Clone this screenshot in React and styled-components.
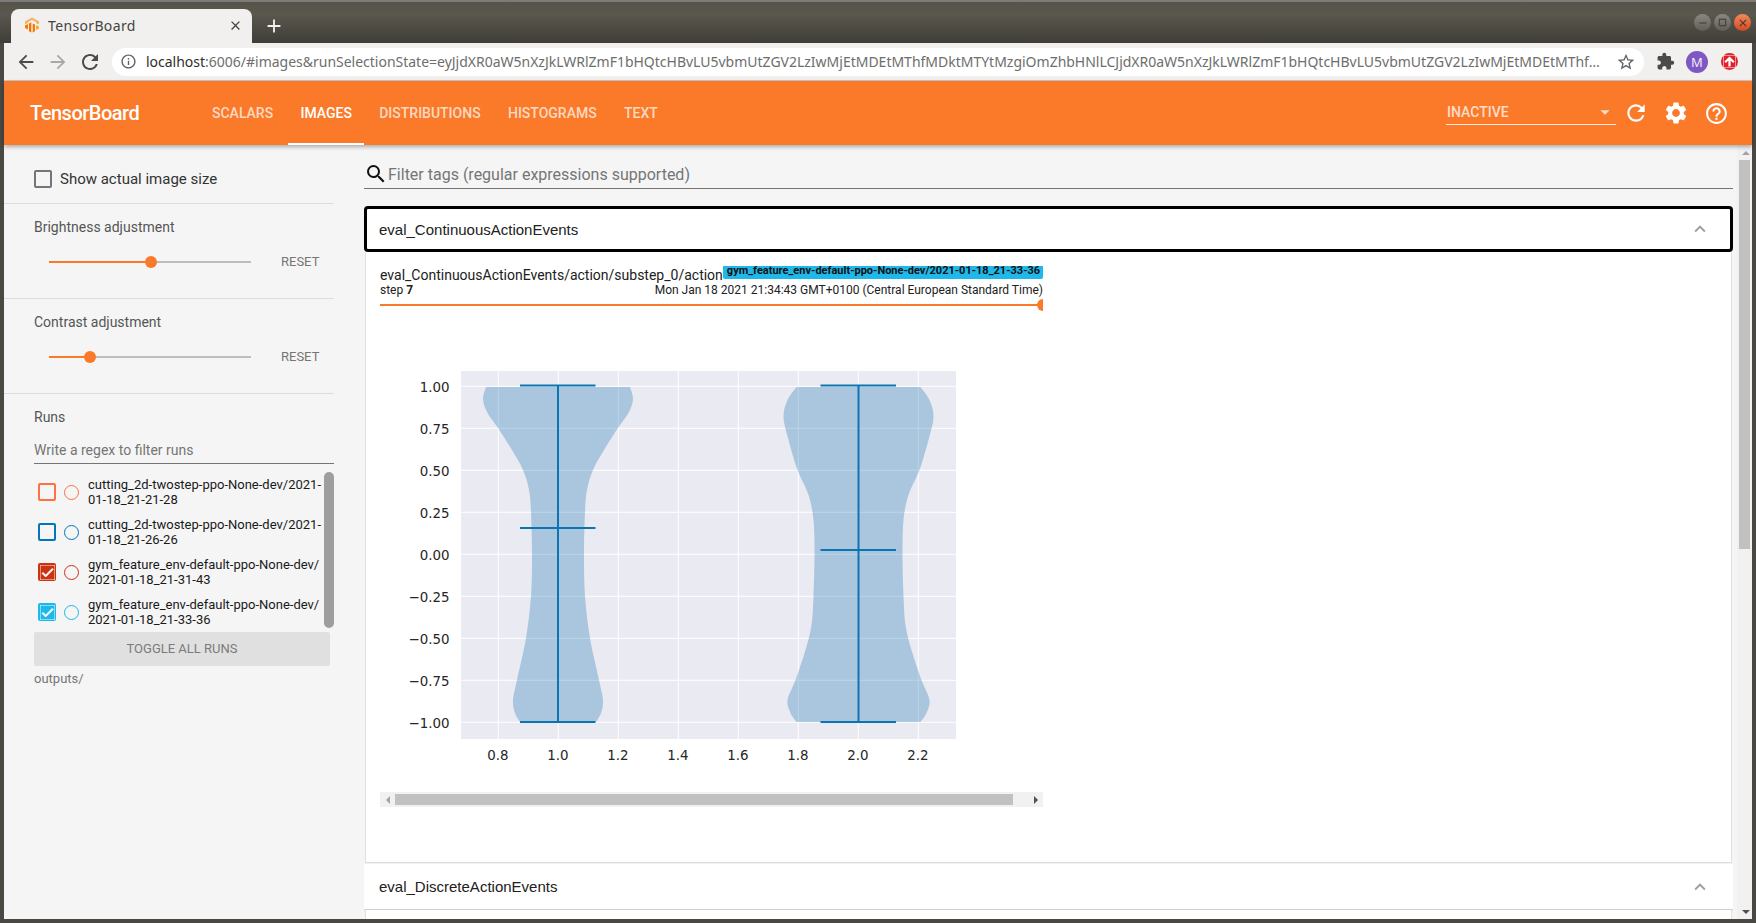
import React from "react";
import styled, { createGlobalStyle } from "styled-components";
import {
  MdAdd,
  MdArrowBack,
  MdArrowDropDown,
  MdArrowForward,
  MdArrowUpward,
  MdCheck,
  MdClose,
  MdCropSquare,
  MdExpandLess,
  MdExtension,
  MdHelpOutline,
  MdInfoOutline,
  MdRefresh,
  MdRemove,
  MdSearch,
  MdSettings,
  MdStarBorder,
} from "react-icons/md";

const ORANGE = "#fb7a29";

const GlobalStyle = createGlobalStyle`
  html, body {
    margin: 0;
    height: 100%;
    overflow: hidden;
  }
  body {
    font-family: Roboto, "Liberation Sans", sans-serif;
    font-size: 14px;
    color: #212121;
  }
  * {
    box-sizing: border-box;
  }
`;

const Window = styled.div`
  width: 1756px;
  height: 923px;
  display: flex;
  flex-direction: column;
  background: #4a4842;
  padding: 0 4px 4px 4px;
  overflow: hidden;
`;

/* browser chrome */
const TitleBar = styled.div`
  height: 43px;
  margin: 0 -4px;
  flex: none;
  display: flex;
  align-items: flex-end;
  padding-left: 11px;
  border-top: 2px solid #7c7b77;
  background: linear-gradient(#56534b, #5a574e 30%, #3f3d37);
`;

const Tab = styled.div`
  width: 241px;
  height: 34px;
  display: flex;
  align-items: center;
  padding: 0 9px 2px 13px;
  background: #f1f0ee;
  border-radius: 8px 8px 0 0;
  font-family: "Noto Sans", sans-serif;
  font-size: 14px;
  letter-spacing: 0.35px;
  color: #45433f;
`;

const TabTitle = styled.span`
  flex: 1;
  margin-left: 8px;
`;

const NewTab = styled.div`
  margin: 0 0 5px 11px;
  color: #f1f0ee;
  display: flex;
  height: 24px;
  align-items: center;
`;

const TitleSpacer = styled.div`
  flex: 1;
`;

const WindowButtons = styled.div`
  display: flex;
  gap: 3px;
  padding-right: 5px;
  align-self: flex-start;
  margin-top: 12px;
`;

const WindowButton = styled.div`
  width: 17px;
  height: 17px;
  border-radius: 50%;
  display: flex;
  align-items: center;
  justify-content: center;
  background: ${({ $close }) =>
    $close
      ? "linear-gradient(#f08a5c, #d5481f)"
      : "linear-gradient(#8a8881, #5f5d56)"};
  color: #3a3833;
`;

const Toolbar = styled.div`
  height: 38px;
  flex: none;
  display: flex;
  align-items: center;
  padding-left: 6px;
  background: #f1f0ee;
  border-bottom: 1px solid #c9c8c4;
`;

const NavButton = styled.div`
  width: 32px;
  height: 32px;
  flex: none;
  display: flex;
  align-items: center;
  justify-content: center;
  color: ${({ $dim }) => ($dim ? "#a9a8a5" : "#4b4b49")};
`;

const Omnibox = styled.div`
  width: 1532px;
  height: 28px;
  margin: 0 5px 0 6px;
  flex: none;
  display: flex;
  align-items: center;
  padding: 0 8px 0 8px;
  border-radius: 14px;
  background: #fff;
  color: #5f6368;
`;

const UrlText = styled.div`
  flex: 1;
  margin-left: 9px;
  font-family: "Noto Sans", sans-serif;
  font-size: 14px;
  letter-spacing: -0.01px;
  white-space: nowrap;
  overflow: hidden;
  color: #6e6e6c;

  b {
    font-weight: 400;
    color: #2e2e2c;
  }
`;

const Avatar = styled.div`
  width: 22px;
  height: 22px;
  border-radius: 50%;
  background: #7e57c2;
  color: #efeaf7;
  font-family: "Noto Sans", sans-serif;
  font-size: 13px;
  display: flex;
  align-items: center;
  justify-content: center;
`;

const UpdateDot = styled.div`
  width: 17px;
  height: 17px;
  border-radius: 50%;
  background: #e0202a;
  color: #fff;
  display: flex;
  align-items: center;
  justify-content: center;

  svg {
    stroke: #fff;
    stroke-width: 2;
  }
`;

/* tensorboard header */
const Header = styled.header`
  height: 64px;
  flex: none;
  display: flex;
  align-items: stretch;
  padding: 0 16px 0 26px;
  background: ${ORANGE};
  color: #fff;
  position: relative;
  z-index: 2;
  box-shadow: 0 2px 4px rgba(0, 0, 0, 0.3);
`;

const Logo = styled.div`
  width: 170px;
  font-size: 20px;
  font-weight: 500;
  letter-spacing: -0.5px;
  line-height: 64px;
`;

const NavTabs = styled.nav`
  display: flex;
  flex: 1;
`;

const NavTab = styled.div`
  padding: 0 12px;
  margin-right: 3.3px;
  font-size: 14px;
  font-weight: 500;
  line-height: 64px;
  text-transform: uppercase;
  color: ${({ $active }) => ($active ? "#fff" : "rgba(255, 255, 255, 0.72)")};
  border-bottom: 2px solid ${({ $active }) => ($active ? "#fff" : "transparent")};
`;

const RunsSelect = styled.div`
  width: 170px;
  height: 27px;
  align-self: flex-start;
  margin-top: 17px;
  padding: 2px 0 0 1px;
  display: flex;
  align-items: center;
  justify-content: space-between;
  font-size: 14px;
  font-weight: 500;
  color: rgba(255, 255, 255, 0.75);
  border-bottom: 1px solid rgba(255, 255, 255, 0.85);
`;

const HeaderIcon = styled.div`
  width: 40px;
  display: flex;
  align-items: center;
  justify-content: center;
`;

/* page */
const Body = styled.div`
  flex: 1;
  min-height: 0;
  display: flex;
  background: #f5f5f5;
`;

const Sidebar = styled.aside`
  width: 360px;
  flex: none;
`;

const Section = styled.div`
  width: 330px;
  padding: 15px 0 24px 30px;
  border-bottom: 1px solid #dcdcdc;
`;

const ActualSizeSection = styled(Section)`
  padding: 25px 0 15px 30px;
  display: flex;
  align-items: center;
  gap: 8px;
  font-size: 15px;
  color: #333;
`;

const PlainBox = styled.div`
  width: 18px;
  height: 18px;
  border: 2px solid #757575;
  border-radius: 2px;
`;

const SectionLabel = styled.div`
  line-height: 16px;
  color: #555;
`;

const SliderRow = styled.div`
  height: 24px;
  margin-top: 15px;
  display: flex;
  align-items: center;
`;

const SliderTrack = styled.div`
  width: 202px;
  height: 2px;
  margin-left: 15px;
  background: #bdbdbd;
  position: relative;
`;

const SliderFill = styled.div`
  height: 100%;
  width: ${({ $at }) => $at}px;
  background: ${ORANGE};
`;

const SliderThumb = styled.div`
  position: absolute;
  left: ${({ $at }) => $at - 6}px;
  top: -5px;
  width: 12px;
  height: 12px;
  border-radius: 50%;
  background: ${ORANGE};
`;

const ResetLabel = styled.div`
  margin: 0 0 2px 30px;
  font-size: 13px;
  color: #757575;
`;

const RunsPanel = styled.div`
  width: 330px;
  padding: 15px 0 0 30px;
`;

const RunFilter = styled.div`
  height: 27px;
  margin-top: 12px;
  padding-top: 5px;
  line-height: 16px;
  color: #757575;
  border-bottom: 1px solid #757575;
`;

const RunsScroller = styled.div`
  height: 156px;
  margin-top: 8px;
  display: flex;
  justify-content: space-between;
  overflow: hidden;
`;

const RunRows = styled.div`
  width: 290px;
`;

const RunRow = styled.div`
  height: 40px;
  display: flex;
  align-items: center;
  padding-left: 4px;
`;

const RunBox = styled.div`
  width: 18px;
  height: 18px;
  flex: none;
  border-radius: 2px;
  border: 2px solid ${({ $color }) => $color};
  background: ${({ $checked, $color }) => ($checked ? $color : "transparent")};
  color: #fff;
  display: flex;
  align-items: center;
  justify-content: center;

  svg {
    stroke: #fff;
    stroke-width: 1.5;
    flex: none;
  }
`;

const RunDot = styled.div`
  width: 15px;
  height: 15px;
  flex: none;
  margin: 0 9px 0 8px;
  border-radius: 50%;
  border: 1.75px solid ${({ $color }) => $color};
`;

const RunName = styled.div`
  font-size: 13px;
  line-height: 15px;
  color: #1a1a1a;
  white-space: pre;
`;

const RunsThumb = styled.div`
  width: 10px;
  border-radius: 5px;
  background: #9e9e9e;
`;

const ToggleButton = styled.div`
  width: 296px;
  height: 34px;
  margin-top: 4px;
  padding-bottom: 2px;
  border-radius: 2px;
  background: #e0e0e0;
  color: #7b7b7b;
  font-size: 13px;
  display: flex;
  align-items: center;
  justify-content: center;
`;

const OutputsLabel = styled.div`
  margin-top: 5px;
  font-size: 13px;
  line-height: 16px;
  color: #757575;
`;

const Main = styled.main`
  width: 1369px;
  flex: none;
  overflow: hidden;
`;

const TagFilter = styled.div`
  height: 44px;
  padding-top: 15px;
  display: flex;
  align-items: center;
  font-size: 16px;
  color: #757575;
  border-bottom: 1px solid #757575;

  svg {
    color: #111;
    flex: none;
  }
`;

const CategoryHeader = styled.div`
  height: ${({ $focused }) => ($focused ? "46px" : "45px")};
  margin-top: ${({ $focused }) => ($focused ? "17px" : "1px")};
  display: flex;
  align-items: center;
  justify-content: space-between;
  padding: 0 ${({ $focused }) => ($focused ? "19px" : "22px")} 0
    ${({ $focused }) => ($focused ? "12px" : "15px")};
  background: #fff;
  font-family: "Liberation Sans", sans-serif;
  font-size: 15px;
  color: #212121;
  border: ${({ $focused }) => ($focused ? "3px solid #000" : "none")};
  border-radius: ${({ $focused }) => ($focused ? "4px" : "0")};
  box-shadow: ${({ $focused }) =>
    $focused ? "none" : "0 1px 2px rgba(0, 0, 0, 0.22)"};

  svg {
    color: #9e9e9e;
  }
`;

const CategoryBody = styled.div`
  height: ${({ $open }) => ($open ? "611px" : "60px")};
  margin: ${({ $open }) => ($open ? "0" : "1px")} 1px 0 1px;
  padding: 14px 0 0 14px;
  background: #fff;
  border: 1px solid #e0e0e0;
  border-top: none;
  border-bottom: ${({ $open }) => ($open ? "1px solid #dcdcdc" : "none")};
`;

const ImageCard = styled.div`
  width: 663px;
`;

const CardTitleRow = styled.div`
  display: flex;
  height: 16px;
`;

const CardTitle = styled.div`
  font-size: 14px;
  line-height: 18px;
  white-space: nowrap;
  color: #212121;
`;

const RunChip = styled.div`
  flex: 1;
  height: 13px;
  padding: 0 3px 0 4px;
  border-radius: 0 0 2px 2px;
  background: #1fb8ea;
  font-size: 11px;
  font-weight: 700;
  line-height: 9px;
  white-space: nowrap;
  overflow: hidden;
  color: #111;
`;

const StepRow = styled.div`
  height: 14px;
  margin-top: 1px;
  display: flex;
  justify-content: space-between;
  font-size: 12px;
  line-height: 14px;
  color: #212121;

  b {
    font-weight: 700;
  }
`;

const StepSlider = styled.div`
  height: 2px;
  margin-top: 7px;
  background: ${ORANGE};
  position: relative;
  overflow: visible;
`;

const StepEnd = styled.div`
  position: absolute;
  right: 0;
  top: -5px;
  width: 6px;
  height: 12px;
  border-radius: 6px 0 0 6px;
  background: ${ORANGE};
`;

const PlotFrame = styled.svg`
  display: block;
  margin-top: 14px;
`;

const TickText = styled.text`
  font-family: "DejaVu Sans", sans-serif;
  font-size: 13.4px;
  fill: #262626;
`;

const HScroll = styled.div`
  height: 15px;
  display: flex;
  align-items: center;
  background: #f1f1f1;
`;

const HThumb = styled.div`
  width: 618px;
  height: 11px;
  margin: 0 15px;
  background: #c1c1c1;
`;

const ArrowGlyph = styled.div`
  width: 0;
  height: 0;
  flex: none;
  border-top: 4px solid transparent;
  border-bottom: 4px solid transparent;
  border-left: ${({ $right }) => ($right ? "4px solid #505050" : "none")};
  border-right: ${({ $right }) => ($right ? "none" : "4px solid #a3a3a3")};
  margin-left: 6px;
  margin-right: ${({ $right }) => ($right ? "0" : "-10px")};
`;

const VScroll = styled.div`
  width: 15px;
  margin-left: 4px;
  flex: none;
  display: flex;
  flex-direction: column;
  align-items: flex-end;
  background: #f1f1f1;
`;

const VArrow = styled.div`
  width: 13px;
  height: 15px;
  flex: none;
  display: flex;
  align-items: center;
  justify-content: center;

  &::after {
    content: "";
    border-left: 4px solid transparent;
    border-right: 4px solid transparent;
    border-${({ $down }) => ($down ? "top" : "bottom")}: 4px solid
      ${({ $down }) => ($down ? "#505050" : "#a3a3a3")};
  }
`;

const VThumb = styled.div`
  width: 11px;
  height: 389px;
  margin-right: 2px;
  background: #c1c1c1;
`;

const VSpacer = styled.div`
  flex: 1;
`;

const RUNS = [
  { name: "cutting_2d-twostep-ppo-None-dev/2021-\n01-18_21-21-28", color: "#ff7043" },
  { name: "cutting_2d-twostep-ppo-None-dev/2021-\n01-18_21-26-26", color: "#0077bb" },
  { name: "gym_feature_env-default-ppo-None-dev/\n2021-01-18_21-31-43", color: "#cc3311", checked: true },
  { name: "gym_feature_env-default-ppo-None-dev/\n2021-01-18_21-33-36", color: "#1fb8ea", checked: true },
];

const URL_REST =
  ":6006/#images&runSelectionState=eyJjdXR0aW5nXzJkLWRlZmF1bHQtcHBvLU5vbmUtZGV2LzIwMjEtMDEtMThfMDktMTYtMzgiOmZhbHNlLCJjdXR0aW5nXzJkLWRlZmF1bHQtcHBvLU5vbmUtZGV2LzIwMjEtMDEtMThf…";

const Y_TICKS = ["1.00", "0.75", "0.50", "0.25", "0.00", "−0.25", "−0.50", "−0.75", "−1.00"];
const X_TICKS = ["0.8", "1.0", "1.2", "1.4", "1.6", "1.8", "2.0", "2.2"];
const tickY = (i) => 386.3 + i * 42;
const tickX = (i) => 498.3 + i * 60;

// half widths of the violins, [y, half width]
const VIOLIN_A = [
  [387, 72], [399, 75], [412, 71], [428, 60], [450, 46], [470, 35], [490, 29], [512, 27],
  [554, 26], [596, 27], [638, 32], [680, 41], [700, 45], [713, 43], [722, 38],
];
const VIOLIN_B = [
  [387, 62], [400, 71], [417, 75], [440, 70], [470, 61], [495, 50], [520, 45], [554, 44],
  [596, 45], [625, 47], [650, 53], [680, 63], [700, 71], [713, 68], [722, 62],
];

// smooth outline through the points, down the right side and back up the left
const violinPath = (cx, pts) => {
  const right = pts.map(([y, w]) => [cx + w, y]);
  const left = pts.map(([y, w]) => [cx - w, y]).reverse();
  const side = (p) => {
    let d = "";
    for (let i = 0; i < p.length - 1; i++) {
      const a = p[i - 1] || p[i];
      const b = p[i];
      const c = p[i + 1];
      const e = p[i + 2] || c;
      d += ` C${b[0] + (c[0] - a[0]) / 6} ${b[1] + (c[1] - a[1]) / 6} ${c[0] - (e[0] - b[0]) / 6} ${
        c[1] - (e[1] - b[1]) / 6
      } ${c[0]} ${c[1]}`;
    }
    return d;
  };
  return `M${right[0][0]} ${right[0][1]}${side(right)} L${left[0][0]} ${left[0][1]}${side(left)} Z`;
};

const TensorBoardMark = () => (
  <svg width="16" height="16" viewBox="0 0 16 16">
    <path d="M8 0.5 15 4.3 15 7.5 12 6 12 5 8 3 4 5 4 6 1 7.5 1 4.3Z" fill="#f6b26b" />
    <path d="M1 8.5 4 7 4 12.5 1 11Z" fill="#f57c00" />
    <path d="M5 6.5 7.3 5.3 7.3 15.5 5 14.3Z" fill="#ff6f00" />
    <path d="M8.7 6.5 11 7.6 11 14.3 8.7 15.5Z" fill="#f57c00" />
    <path d="M12 8.2 15 9.5 15 11.4 12 13Z" fill="#ffa726" />
  </svg>
);

const Violin = ({ cx, mean, pts }) => (
  <g>
    <path d={violinPath(cx, pts)} fill="#1875af" fillOpacity="0.3" />
    <g stroke="#0b75b3" strokeWidth="2" fill="none">
      <path d={`M${cx} 385.6V722.4`} />
      <path d={`M${cx - 38} 385.6H${cx + 37.5}`} />
      <path d={`M${cx - 38} ${mean}H${cx + 37.5}`} />
      <path d={`M${cx - 38} 722H${cx + 37.5}`} />
    </g>
  </g>
);

const ViolinPlot = () => (
  <PlotFrame width="663" height="472" viewBox="380 320 663 472">
    <rect x="461" y="371" width="495" height="368" fill="#eaeaf2" />
    <g stroke="#fff" strokeWidth="1">
      {Y_TICKS.map((t, i) => (
        <line key={t} x1="461" x2="956" y1={tickY(i)} y2={tickY(i)} />
      ))}
      {X_TICKS.map((t, i) => (
        <line key={t} x1={tickX(i)} x2={tickX(i)} y1="371" y2="739" />
      ))}
    </g>
    <Violin cx={558} mean={528} pts={VIOLIN_A} />
    <Violin cx={858.5} mean={550} pts={VIOLIN_B} />
    {Y_TICKS.map((t, i) => (
      <TickText key={t} x="449.5" y={tickY(i) + 6} textAnchor="end">
        {t}
      </TickText>
    ))}
    {X_TICKS.map((t, i) => (
      <TickText key={t} x={tickX(i) - 0.5} y="760" textAnchor="middle">
        {t}
      </TickText>
    ))}
  </PlotFrame>
);

const Adjustment = ({ label, at }) => (
  <Section>
    <SectionLabel>{label}</SectionLabel>
    <SliderRow>
      <SliderTrack>
        <SliderFill $at={at} />
        <SliderThumb $at={at} />
      </SliderTrack>
      <ResetLabel>RESET</ResetLabel>
    </SliderRow>
  </Section>
);

export default function App() {
  return (
    <Window>
      <GlobalStyle />
      <TitleBar>
        <Tab>
          <TensorBoardMark />
          <TabTitle>TensorBoard</TabTitle>
          <MdClose size={15} />
        </Tab>
        <NewTab>
          <MdAdd size={22} />
        </NewTab>
        <TitleSpacer />
        <WindowButtons>
          <WindowButton>
            <MdRemove size={12} />
          </WindowButton>
          <WindowButton>
            <MdCropSquare size={11} />
          </WindowButton>
          <WindowButton $close>
            <MdClose size={12} />
          </WindowButton>
        </WindowButtons>
      </TitleBar>

      <Toolbar>
        <NavButton>
          <MdArrowBack size={22} />
        </NavButton>
        <NavButton $dim>
          <MdArrowForward size={22} />
        </NavButton>
        <NavButton>
          <MdRefresh size={24} />
        </NavButton>
        <Omnibox>
          <MdInfoOutline size={17} />
          <UrlText>
            <b>localhost</b>
            {URL_REST}
          </UrlText>
          <MdStarBorder size={20} />
        </Omnibox>
        <NavButton>
          <MdExtension size={19} />
        </NavButton>
        <NavButton>
          <Avatar>M</Avatar>
        </NavButton>
        <NavButton>
          <UpdateDot>
            <MdArrowUpward size={13} />
          </UpdateDot>
        </NavButton>
      </Toolbar>

      <Header>
        <Logo>TensorBoard</Logo>
        <NavTabs>
          <NavTab>Scalars</NavTab>
          <NavTab $active>Images</NavTab>
          <NavTab>Distributions</NavTab>
          <NavTab>Histograms</NavTab>
          <NavTab>Text</NavTab>
        </NavTabs>
        <RunsSelect>
          INACTIVE
          <MdArrowDropDown size={22} />
        </RunsSelect>
        <HeaderIcon>
          <MdRefresh size={26} />
        </HeaderIcon>
        <HeaderIcon>
          <MdSettings size={26} />
        </HeaderIcon>
        <HeaderIcon>
          <MdHelpOutline size={25} />
        </HeaderIcon>
      </Header>

      <Body>
        <Sidebar>
          <ActualSizeSection>
            <PlainBox />
            Show actual image size
          </ActualSizeSection>
          <Adjustment label="Brightness adjustment" at={102} />
          <Adjustment label="Contrast adjustment" at={41} />
          <RunsPanel>
            <SectionLabel>Runs</SectionLabel>
            <RunFilter>Write a regex to filter runs</RunFilter>
            <RunsScroller>
              <RunRows>
                {RUNS.map((run) => (
                  <RunRow key={run.name}>
                    <RunBox $color={run.color} $checked={run.checked}>
                      {run.checked && <MdCheck size={15} />}
                    </RunBox>
                    <RunDot $color={run.color} />
                    <RunName>{run.name}</RunName>
                  </RunRow>
                ))}
              </RunRows>
              <RunsThumb />
            </RunsScroller>
            <ToggleButton>TOGGLE ALL RUNS</ToggleButton>
            <OutputsLabel>outputs/</OutputsLabel>
          </RunsPanel>
        </Sidebar>

        <Main>
          <TagFilter>
            <MdSearch size={24} />
            Filter tags (regular expressions supported)
          </TagFilter>
          <CategoryHeader $focused>
            eval_ContinuousActionEvents
            <MdExpandLess size={22} />
          </CategoryHeader>
          <CategoryBody $open>
            <ImageCard>
              <CardTitleRow>
                <CardTitle>eval_ContinuousActionEvents/action/substep_0/action</CardTitle>
                <RunChip>gym_feature_env-default-ppo-None-dev/2021-01-18_21-33-36</RunChip>
              </CardTitleRow>
              <StepRow>
                <span>
                  step <b>7</b>
                </span>
                <span>Mon Jan 18 2021 21:34:43 GMT+0100 (Central European Standard Time)</span>
              </StepRow>
              <StepSlider>
                <StepEnd />
              </StepSlider>
              <ViolinPlot />
              <HScroll>
                <ArrowGlyph />
                <HThumb />
                <ArrowGlyph $right />
              </HScroll>
            </ImageCard>
          </CategoryBody>
          <CategoryHeader>
            eval_DiscreteActionEvents
            <MdExpandLess size={22} />
          </CategoryHeader>
          <CategoryBody />
        </Main>

        <VScroll>
          <VArrow />
          <VThumb />
          <VSpacer />
          <VArrow $down />
        </VScroll>
      </Body>
    </Window>
  );
}
